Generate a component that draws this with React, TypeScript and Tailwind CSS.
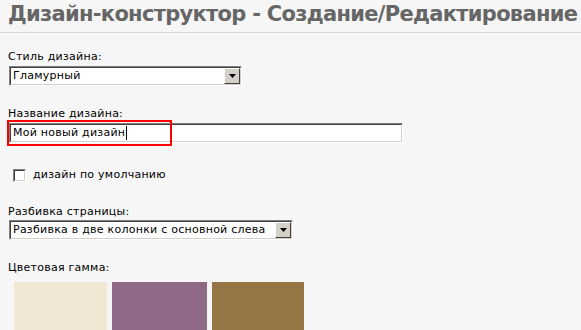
import React from 'react'

const font = { fontFamily: '"DejaVu Sans", Tahoma, sans-serif' }

function Arrow() {
  return (
    <div className="flex h-full w-[16px] shrink-0 items-center justify-center border border-t-[#fff] border-l-[#fff] border-b-[#404040] border-r-[#404040] bg-[#d4d0c8]">
      <svg width="7" height="4" viewBox="0 0 7 4">
        <path d="M0 0h7L3.5 4z" fill="#000" />
      </svg>
    </div>
  )
}

function Sunken({ className, children }: { className: string; children?: React.ReactNode }) {
  return (
    <div className={`border border-t-[#808080] border-l-[#808080] border-b-[#fff] border-r-[#fff] ${className}`}>
      <div className="flex h-full items-center border border-t-[#404040] border-l-[#404040] border-b-[#d4d0c8] border-r-[#d4d0c8] bg-white">
        {children}
      </div>
    </div>
  )
}

const txt = 'text-[11px] leading-[14px] tracking-[0.25px] text-black'

function Select({ value, width }: { value: string; width: string }) {
  return (
    <Sunken className={`${width} h-[20px]`}>
      <span className={`flex-1 whitespace-nowrap pl-[2px] ${txt}`}>{value}</span>
      <Arrow />
    </Sunken>
  )
}

function Label({ children }: { children: React.ReactNode }) {
  return <div className={txt}>{children}</div>
}

export default function App() {
  return (
    <div className="h-[330px] w-[581px] overflow-hidden bg-[#f6f6f6]" style={font}>
      <div className="h-[33px] border-b border-[#d8d8d8] px-[8px]">
        <h1 className="whitespace-nowrap text-[21px] font-bold leading-[29px] tracking-[-0.7px] text-[#666666]">
          Дизайн-конструктор - Создание/Редактирование
        </h1>
      </div>

      <div className="pl-[9px]">
        <div className="mt-[17px] -ml-[1px]">
          <Label>Стиль дизайна:</Label>
        </div>
        <div className="mt-[2px]">
          <Select value="Гламурный" width="w-[233px]" />
        </div>

        <div className="mt-[21px] -ml-[1px]">
          <Label>Название дизайна:</Label>
        </div>
        <div className="relative mt-[2px]">
          <Sunken className="w-[394px] h-[20px]">
            <span className={`pl-[2px] ${txt}`}>Мой новый дизайн</span>
            <span className="ml-[1px] h-[14px] w-px bg-black" />
          </Sunken>
          <div className="absolute -left-[2px] -top-[3px] h-[26px] w-[165px] border-2 border-[#ff0000]" />
        </div>

        <div className="mt-[25px] flex items-center pl-[4px]">
          <Sunken className="h-[13px] w-[13px]" />
          <span className={`ml-[7px] ${txt}`}>дизайн по умолчанию</span>
        </div>

        <div className="mt-[23px] -ml-[1px]">
          <Label>Разбивка страницы:</Label>
        </div>
        <div className="mt-[1px]">
          <Select value="Разбивка в две колонки с основной слева" width="w-[284px]" />
        </div>

        <div className="mt-[21px] -ml-[1px]">
          <Label>Цветовая гамма:</Label>
        </div>
        <div className="mt-[7px] flex gap-[5px] pl-[5px]">
          <div className="h-[60px] w-[93px] bg-[#f0e8d5]" />
          <div className="h-[60px] w-[95px] bg-[#8e6a86]" />
          <div className="h-[60px] w-[92px] bg-[#967644]" />
        </div>
      </div>
    </div>
  )
}
